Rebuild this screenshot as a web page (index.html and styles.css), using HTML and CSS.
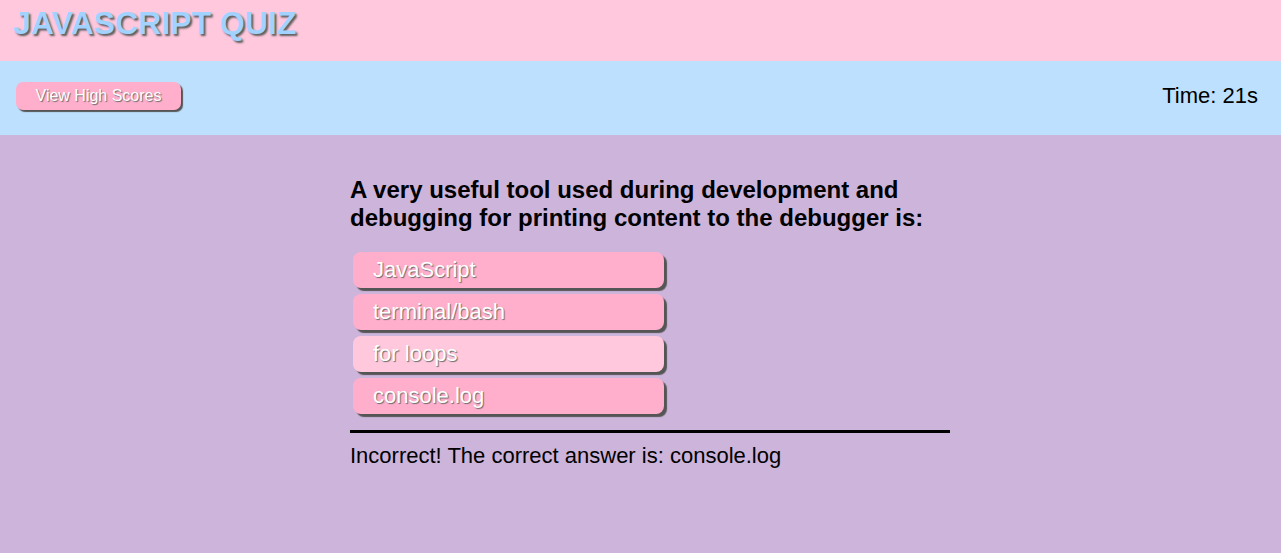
FILE: index.html
```html
<!DOCTYPE html>
<html>
<head>
<meta charset="utf-8">
<link rel="stylesheet" href="styles.css">
</head>
<body>
<header class="site-header">
  <h1 class="title">JAVASCRIPT QUIZ</h1>
</header>
<nav class="nav">
  <button class="scores-btn">View High Scores</button>
  <div class="timer">Time: 21s</div>
</nav>
<main class="main">
  <section class="quiz">
    <h2 class="question">A very useful tool used during development and debugging for printing content to the debugger is:</h2>
    <div class="answers">
      <button class="answer">JavaScript</button>
      <button class="answer">terminal/bash</button>
      <button class="answer answer-hover">for loops</button>
      <button class="answer">console.log</button>
    </div>
    <div class="feedback">Incorrect! The correct answer is: console.log</div>
  </section>
</main>
</body>
</html>
```

FILE: styles.css
```css
html, body {
  margin: 0;
  padding: 0;
  height: 100%;
}
body {
  font-family: "Liberation Sans", Arial, sans-serif;
  background: #cdb4db;
  display: flex;
  flex-direction: column;
}
.site-header {
  background: #ffc8dd;
  height: 61px;
  box-sizing: border-box;
  padding: 5px 13px 0;
}
.title {
  margin: 0;
  font-size: 32px;
  font-weight: bold;
  color: #a2d2ff;
  text-shadow: 2px 2px 2px #5e5e5e;
  line-height: 36px;
}
.nav {
  background: #bde0fe;
  height: 74px;
  box-sizing: border-box;
  display: flex;
  align-items: flex-start;
  justify-content: space-between;
  padding: 21px 23px 0 16px;
}
.scores-btn {
  font-family: "Liberation Sans", Arial, sans-serif;
  font-size: 16px;
  color: #fff;
  text-shadow: 1px 1px 1px #6b6b6b;
  background: #ffafcc;
  border: none;
  border-radius: 7px;
  box-shadow: 2px 2px 1px #555;
  width: 165px;
  height: 28px;
  padding: 0;
}
.timer {
  font-size: 22px;
  line-height: 26px;
  color: #000;
  margin-top: 1px;
}
.main {
  flex: 1;
}
.quiz {
  margin-left: 350px;
  width: 600px;
  padding-top: 41px;
}
.question {
  margin: 0;
  font-size: 24px;
  font-weight: bold;
  line-height: 28px;
  color: #000;
}
.answers {
  display: flex;
  flex-direction: column;
  align-items: flex-start;
  gap: 6px;
  margin-top: 20px;
  padding-left: 3px;
}
.answer {
  font-family: "Liberation Sans", Arial, sans-serif;
  font-size: 22px;
  color: #fff;
  text-shadow: 1px 1px 1px #6b6b6b;
  background: #ffafcc;
  border: none;
  border-radius: 8px;
  box-shadow: 3px 3px 1px #555;
  width: 311px;
  height: 36px;
  padding: 0 0 0 20px;
  text-align: left;
}
.answer-hover {
  background: #ffc8dd;
}
.feedback {
  border-top: 3px solid #000;
  margin-top: 16px;
  padding-top: 10px;
  font-size: 22px;
  line-height: 26px;
  color: #000;
}
```
